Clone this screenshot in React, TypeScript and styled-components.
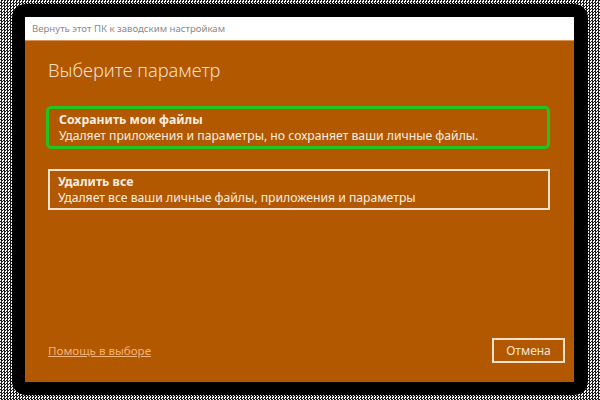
import styled, { createGlobalStyle } from "styled-components";

const GlobalStyle = createGlobalStyle`
  html, body {
    margin: 0;
    padding: 0;
    width: 600px;
    height: 400px;
    overflow: hidden;
  }
  body {
    font-family: "Noto Sans", "Open Sans", "Liberation Sans", sans-serif;
    background-color: #ffffff;
    background-image: repeating-conic-gradient(#1a1a1a 0 25%, #ffffff 0 50%);
    background-size: 3px 3px;
  }
`;

const App = () => {
  return (
    <>
      <GlobalStyle />
      <Frame>
        <Window>
          <TitleBar>Вернуть этот ПК к заводским настройкам</TitleBar>
          <Body>
            <Heading>Выберите параметр</Heading>
            <Options>
              <Option $selected>
                <OptionTitle>Сохранить мои файлы</OptionTitle>
                <OptionText>
                  Удаляет приложения и параметры, но сохраняет ваши личные файлы.
                </OptionText>
              </Option>
              <Option>
                <OptionTitle>Удалить все</OptionTitle>
                <OptionText>
                  Удаляет все ваши личные файлы, приложения и параметры
                </OptionText>
              </Option>
            </Options>
            <Footer>
              <HelpLink>Помощь в выборе</HelpLink>
              <CancelButton>Отмена</CancelButton>
            </Footer>
          </Body>
        </Window>
      </Frame>
    </>
  );
};

const Frame = styled.div`
  box-sizing: border-box;
  margin: 4px 12px 0 12px;
  width: 576px;
  height: 391px;
  background: #000;
  border-radius: 14px;
  padding: 13px 14px 13px 13px;
  display: flex;
`;

const Window = styled.div`
  flex: 1;
  display: flex;
  flex-direction: column;
  background: #b15800;
`;

const TitleBar = styled.div`
  height: 23px;
  background: #ffffff;
  border-bottom: 1px solid #d9935a;
  color: #8a8a8a;
  font-size: 9.6px;
  line-height: 23px;
  padding-left: 7px;
`;

const Body = styled.div`
  flex: 1;
  display: flex;
  flex-direction: column;
  padding: 16px 9px 19px 23px;
`;

const Heading = styled.h1`
  margin: 0 0 23px 0;
  font-weight: 300;
  font-size: 18.3px;
  line-height: 26px;
  color: #f6dfc8;
`;

const Options = styled.div`
  display: flex;
  flex-direction: column;
  gap: 20px;
`;

const Option = styled.div<{ $selected?: boolean }>`
  box-sizing: border-box;
  width: ${(p) => (p.$selected ? "504px" : "502px")};
  margin-left: ${(p) => (p.$selected ? "-2px" : "0")};
  border: ${(p) => (p.$selected ? "3px solid #22c322" : "2px solid #f4e1cc")};
  border-radius: ${(p) => (p.$selected ? "5px" : "0")};
  padding: ${(p) => (p.$selected ? "3px 10px 2px 10px" : "3px 8px 2px 8px")};
  color: #fbeee0;
`;

const OptionTitle = styled.div`
  font-weight: 700;
  font-size: 12.3px;
  line-height: 16px;
`;

const OptionText = styled.div`
  font-size: 12.2px;
  line-height: 16px;
`;

const Footer = styled.div`
  margin-top: auto;
  display: flex;
  justify-content: space-between;
  align-items: center;
`;

const HelpLink = styled.a`
  color: #f3b37a;
  font-size: 11.6px;
  text-decoration: underline;
  cursor: pointer;
`;

const CancelButton = styled.button`
  box-sizing: border-box;
  width: 73px;
  height: 25px;
  background: transparent;
  border: 2px solid #f4e1cc;
  color: #f8e6d2;
  font-family: inherit;
  font-size: 12px;
  padding: 0;
  cursor: pointer;
`;

export default App;
